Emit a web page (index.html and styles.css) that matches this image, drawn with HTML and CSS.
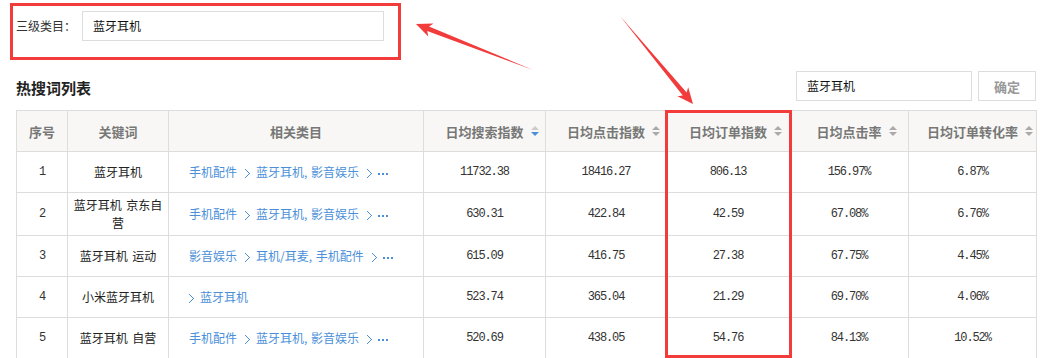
FILE: index.html
```html
<!DOCTYPE html>
<html lang="zh-CN">
<head>
<meta charset="utf-8">
<title>热搜词列表</title>
<link rel="stylesheet" href="styles.css">
</head>
<body>
<div class="page">
  <div class="filter">
    <span class="filter-label">三级类目：</span>
    <div class="input filter-input">蓝牙耳机</div>
  </div>

  <div class="toolbar">
    <h2 class="title">热搜词列表</h2>
    <div class="search">
      <div class="input search-input">蓝牙耳机</div>
      <button class="btn">确定</button>
    </div>
  </div>

  <table class="grid">
    <colgroup>
      <col class="c-no"><col class="c-kw"><col class="c-cat"><col class="c-n1"><col class="c-n2"><col class="c-n3"><col class="c-n4"><col class="c-n5">
    </colgroup>
    <thead>
      <tr>
        <th>序号</th>
        <th>关键词</th>
        <th>相关类目</th>
        <th><span class="sortable">日均搜索指数<i class="sort active"></i></span></th>
        <th><span class="sortable">日均点击指数<i class="sort"></i></span></th>
        <th><span class="sortable">日均订单指数<i class="sort"></i></span></th>
        <th><span class="sortable">日均点击率<i class="sort"></i></span></th>
        <th><span class="sortable">日均订单转化率<i class="sort"></i></span></th>
      </tr>
    </thead>
    <tbody>
      <tr>
        <td class="num">1</td>
        <td class="kw">蓝牙耳机</td>
        <td class="cat"><a>手机配件</a><i class="chev"></i><a>蓝牙耳机, 影音娱乐</a><i class="chev"></i><i class="more"></i></td>
        <td class="num">11732.38</td><td class="num">18416.27</td><td class="num">806.13</td><td class="num">156.97%</td><td class="num">6.87%</td>
      </tr>
      <tr>
        <td class="num">2</td>
        <td class="kw">蓝牙耳机 京东自营</td>
        <td class="cat"><a>手机配件</a><i class="chev"></i><a>蓝牙耳机, 影音娱乐</a><i class="chev"></i><i class="more"></i></td>
        <td class="num">630.31</td><td class="num">422.84</td><td class="num">42.59</td><td class="num">67.08%</td><td class="num">6.76%</td>
      </tr>
      <tr>
        <td class="num">3</td>
        <td class="kw">蓝牙耳机 运动</td>
        <td class="cat"><a>影音娱乐</a><i class="chev"></i><a>耳机/耳麦, 手机配件</a><i class="chev"></i><i class="more"></i></td>
        <td class="num">615.09</td><td class="num">416.75</td><td class="num">27.38</td><td class="num">67.75%</td><td class="num">4.45%</td>
      </tr>
      <tr>
        <td class="num">4</td>
        <td class="kw">小米蓝牙耳机</td>
        <td class="cat"><i class="chev first"></i><a>蓝牙耳机</a></td>
        <td class="num">523.74</td><td class="num">365.04</td><td class="num">21.29</td><td class="num">69.70%</td><td class="num">4.06%</td>
      </tr>
      <tr>
        <td class="num">5</td>
        <td class="kw">蓝牙耳机 自营</td>
        <td class="cat"><a>手机配件</a><i class="chev"></i><a>蓝牙耳机, 影音娱乐</a><i class="chev"></i><i class="more"></i></td>
        <td class="num">520.69</td><td class="num">438.05</td><td class="num">54.76</td><td class="num">84.13%</td><td class="num">10.52%</td>
      </tr>
    </tbody>
  </table>
</div>

<div class="mark mark-filter"></div>
<div class="mark mark-column"></div>
<svg class="arrows" width="1056" height="358" viewBox="0 0 1056 358" aria-hidden="true">
  <polygon points="533,70 429,26.4 433.5,23.4 416,24 428.3,36.4 427.2,31.1"/>
  <polygon points="620,16 682.8,95.6 677.4,96.2 693,104 688.2,87.2 686.6,92.4"/>
</svg>
</body>
</html>
```

FILE: styles.css
```css
* { box-sizing: border-box; }

html, body {
  margin: 0;
  padding: 0;
  background: #fff;
}

body {
  width: 1056px;
  height: 358px;
  overflow: hidden;
  position: relative;
  font-family: "Noto Sans CJK SC", "Liberation Sans", sans-serif;
  font-size: 12px;
  color: #333;
}

.page {
  padding: 11px 20px 0 16px;
}

/* filter row */
.filter {
  display: flex;
  align-items: center;
  height: 30px;
}
.filter-label {
  width: 66px;
  line-height: 30px;
}
.input {
  height: 30px;
  border: 1px solid #ddd;
  background: #fff;
  padding: 0 10px;
  line-height: 28px;
  font-size: 12px;
  color: #111;
}
.filter-input {
  width: 302px;
}

/* toolbar */
.toolbar {
  display: flex;
  justify-content: space-between;
  align-items: center;
  margin-top: 30px;
  height: 30px;
}
.title {
  margin: 0;
  font-size: 15px;
  font-weight: bold;
  color: #222;
  line-height: 30px;
  padding-top: 4px;
}
.search {
  display: flex;
  gap: 6px;
}
.search-input {
  width: 176px;
}
.btn {
  width: 58px;
  height: 30px;
  border: 1px solid #ddd;
  background: #fff;
  color: #999;
  font-family: inherit;
  font-size: 13px;
  font-weight: bold;
  padding: 0;
}

/* table */
.grid {
  margin-top: 9px;
  border-collapse: collapse;
  table-layout: fixed;
  width: 1020px;
}
.c-no { width: 51px; }
.c-kw { width: 101px; }
.c-cat { width: 255px; }
.c-n1 { width: 122px; }
.c-n2 { width: 121px; }
.c-n3 { width: 123px; }
.c-n4 { width: 119px; }
.c-n5 { width: 128px; }

.grid th,
.grid td {
  border: 1px solid #ddd;
  text-align: center;
  vertical-align: middle;
}
.grid th {
  height: 41px;
  padding: 0 4px;
  background: #f8f7f5;
  color: #777;
  font-size: 13px;
  font-weight: bold;
}
.grid td {
  height: 41px;
  padding: 3px 5px;
  line-height: 18px;
  color: #222;
}
.grid td.kw {
  word-spacing: 2px;
}
.grid td.num {
  font-family: "Liberation Mono", "DejaVu Sans Mono", monospace;
  font-size: 12px;
  letter-spacing: -1.1px;
  color: #333;
}
.grid td.cat {
  text-align: left;
  padding-left: 20px;
  white-space: nowrap;
  color: #4a90d9;
  word-spacing: 1px;
}
.cat a {
  color: #4a90d9;
}

.sortable {
  position: relative;
  display: inline-block;
}
.sort {
  position: absolute;
  left: calc(100% + 7px);
  top: 50%;
  margin-top: -5px;
  width: 8px;
  height: 10px;
}
.sort::before,
.sort::after {
  content: "";
  position: absolute;
  left: 0;
  border-left: 4px solid transparent;
  border-right: 4px solid transparent;
}
.sort::before {
  top: 0;
  border-bottom: 4px solid #aaa;
}
.sort::after {
  bottom: 0;
  border-top: 4px solid #aaa;
}
.sort.active::before { border-bottom-color: #ccc; }
.sort.active::after { border-top-color: #4a90d9; }

.chev {
  display: inline-block;
  width: 5px;
  height: 9px;
  margin: 0 6px 0 8px;
  vertical-align: -1px;
  background:
    linear-gradient(to top right, transparent 43%, #4a90d9 43%, #4a90d9 57%, transparent 57%) top / 5px 5px no-repeat,
    linear-gradient(to bottom right, transparent 43%, #4a90d9 43%, #4a90d9 57%, transparent 57%) bottom / 5px 5px no-repeat;
}
.chev.first { margin-left: 0; }
.more {
  display: inline-block;
  width: 10px;
  height: 2px;
  vertical-align: middle;
  background: linear-gradient(to right, #4a90d9 0 2px, transparent 2px 4px) 0 0 / 4px 2px repeat-x;
}

/* annotation overlays */
.mark {
  position: absolute;
  border: 3px solid #f23b3b;
  pointer-events: none;
}
.mark-filter {
  left: 10px;
  top: 3px;
  width: 391px;
  height: 57px;
}
.mark-column {
  left: 665px;
  top: 110px;
  width: 127px;
  height: 248px;
}
.arrows {
  position: absolute;
  left: 0;
  top: 0;
  pointer-events: none;
}
.arrows polygon {
  fill: #f23b3b;
}
```
